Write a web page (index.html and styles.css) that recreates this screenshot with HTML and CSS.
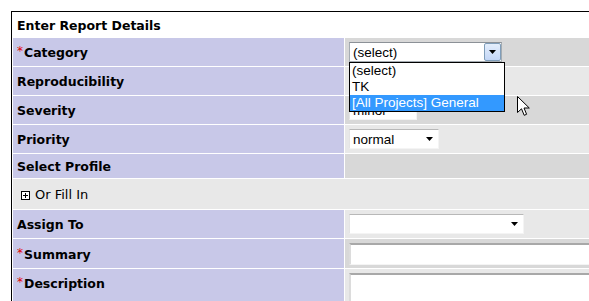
FILE: index.html
```html
<!DOCTYPE html>
<html>
<head>
<meta charset="utf-8">
<title>Enter Report Details</title>
<link rel="stylesheet" href="styles.css">
</head>
<body>
<table class="form">
  <colgroup>
    <col class="col-label">
    <col class="col-value">
  </colgroup>
  <tr>
    <td colspan="2" class="title">Enter Report Details</td>
  </tr>
  <tr class="h28">
    <td class="cat"><span class="req">*</span>Category</td>
    <td class="val dark">
      <div class="combo focus w153">
        <span class="combo-text">(select)</span>
        <span class="btn"><svg width="7" height="4" viewBox="0 0 7 4"><path d="M0 0H7L3.5 4Z" fill="#000"/></svg></span>
        <ul class="droplist">
          <li>(select)</li>
          <li>TK</li>
          <li class="hl">[All Projects] General</li>
        </ul>
      </div>
    </td>
  </tr>
  <tr class="h28">
    <td class="cat">Reproducibility</td>
    <td class="val light"></td>
  </tr>
  <tr class="h28">
    <td class="cat">Severity</td>
    <td class="val dark">
      <div class="combo w68">
        <span class="combo-text">minor</span>
        <span class="arrow"><svg width="7" height="4" viewBox="0 0 7 4"><path d="M0 0H7L3.5 4Z" fill="#000"/></svg></span>
      </div>
    </td>
  </tr>
  <tr class="h28">
    <td class="cat">Priority</td>
    <td class="val light">
      <div class="combo w90">
        <span class="combo-text">normal</span>
        <span class="arrow"><svg width="7" height="4" viewBox="0 0 7 4"><path d="M0 0H7L3.5 4Z" fill="#000"/></svg></span>
      </div>
    </td>
  </tr>
  <tr class="h24">
    <td class="cat">Select Profile</td>
    <td class="val dark"></td>
  </tr>
  <tr class="h30">
    <td colspan="2" class="fill">
      <span class="plus"><svg width="9" height="9" viewBox="0 0 9 9"><rect x="0.5" y="0.5" width="8" height="8" fill="#fff" stroke="#000"/><path d="M2 4.5H7M4.5 2V7" stroke="#000"/></svg></span>Or Fill In
    </td>
  </tr>
  <tr class="h28">
    <td class="cat">Assign To</td>
    <td class="val light">
      <div class="combo w175">
        <span class="combo-text"></span>
        <span class="arrow"><svg width="7" height="4" viewBox="0 0 7 4"><path d="M0 0H7L3.5 4Z" fill="#000"/></svg></span>
      </div>
    </td>
  </tr>
  <tr class="h29">
    <td class="cat"><span class="req">*</span>Summary</td>
    <td class="val dark"><div class="textbox"></div></td>
  </tr>
  <tr class="h100">
    <td class="cat top"><span class="req">*</span>Description</td>
    <td class="val light top"><div class="textarea"></div></td>
  </tr>
</table>
<div class="cursor">
  <svg width="13" height="21" viewBox="0 0 13 21"><path d="M0.5 0.5V16.5L4.5 12.8L7.2 19.3L9.6 18.3L7 12H12.3Z" fill="#fff" stroke="#000" stroke-linejoin="round"/></svg>
</div>
</body>
</html>
```

FILE: styles.css
```css
html, body {
  margin: 0;
  padding: 0;
  background: #fff;
  overflow: hidden;
}
body {
  padding: 11px 0 0 11px;
  width: 800px;
  height: 320px;
  position: relative;
}
.form {
  border: 1px solid #000;
  border-collapse: separate;
  border-spacing: 1px;
  background: #fff;
  width: 760px;
  table-layout: fixed;
  font-family: "DejaVu Sans", Verdana, sans-serif;
  font-size: 12.5px;
}
.col-label { width: 331px; }
.col-value { width: auto; }
.form td {
  padding: 0 0 0 4px;
  vertical-align: middle;
  overflow: visible;
}
.title {
  height: 24px;
  font-weight: bold;
  color: #000;
}
.h24 td { height: 24px; }
.h28 td { height: 28px; }
.h29 td { height: 29px; }
.h30 td { height: 30px; }
.h100 td { height: 100px; }
.cat {
  background: #c8c8e8;
  font-weight: bold;
  color: #000;
}
.req {
  color: #e00000;
  font-weight: normal;
  font-size: 12px;
  vertical-align: 2px;
  margin-right: 1px;
}
.val { padding-left: 4px; }
.dark { background: #d8d8d8; }
.light { background: #e8e8e8; }
.top { vertical-align: top !important; }
.top.cat { padding-top: 6px; }
.top.val { padding-top: 4px; }
.fill {
  background: #e8e8e8;
  padding-left: 8px !important;
  font-size: 13px;
}
.plus {
  display: inline-block;
  vertical-align: -1px;
  margin-right: 5px;
}
.plus svg { display: block; }
.combo {
  position: relative;
  display: flex;
  align-items: center;
  height: 20px;
  box-sizing: border-box;
  background: #fff;
  border: 1px solid #f4f4f4;
  border-top-color: #b8b8b8;
  border-left-color: #e4e4e4;
  font-family: "Liberation Sans", Arial, sans-serif;
  font-size: 13.5px;
  color: #000;
}
.combo.focus {
  border: 1px solid #a5acb2;
  border-top-color: #8c9197;
}
.w153 { width: 153px; }
.w68 { width: 68px; }
.w90 { width: 90px; }
.w175 { width: 175px; }
.combo-text {
  flex: 1;
  padding-left: 3px;
  white-space: nowrap;
}
.btn {
  width: 17px;
  height: 18px;
  box-sizing: border-box;
  border: 1px solid #7f9db9;
  border-radius: 2px;
  background: linear-gradient(#e4eefc, #c3d6f6);
  display: flex;
  align-items: center;
  justify-content: center;
}
.btn svg, .arrow svg { display: block; }
.arrow {
  width: 17px;
  height: 18px;
  display: flex;
  align-items: center;
  justify-content: center;
}
.droplist {
  position: absolute;
  left: -1px;
  top: 19px;
  width: 154px;
  margin: 0;
  padding: 0;
  list-style: none;
  background: #fff;
  border: 1px solid #000;
  z-index: 5;
}
.droplist li {
  height: 16px;
  line-height: 16px;
  padding-left: 2px;
  white-space: nowrap;
}
.droplist li.hl {
  background: #3399ff;
  color: #fff;
}
.textbox {
  width: 420px;
  height: 22px;
  box-sizing: border-box;
  background: #fff;
  border: 1px solid #f4f4f4;
  border-top: 2px solid #a8a8a8;
  border-left: 2px solid #dcdcdc;
}
.textarea {
  width: 420px;
  height: 80px;
  box-sizing: border-box;
  background: #fff;
  border: 1px solid #f4f4f4;
  border-top: 2px solid #a8a8a8;
  border-left: 2px solid #dcdcdc;
}
.cursor {
  position: absolute;
  left: 517px;
  top: 96px;
  z-index: 10;
}
.cursor svg { display: block; }
```
